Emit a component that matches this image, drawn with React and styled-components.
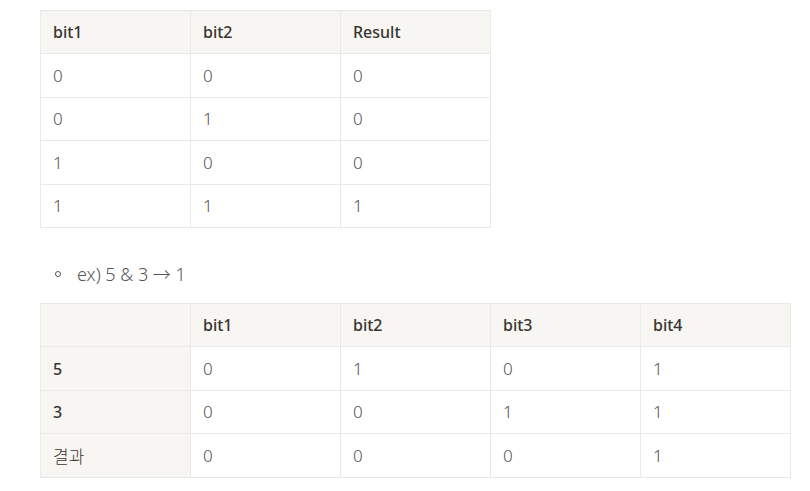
import React from "react";
import styled, { createGlobalStyle } from "styled-components";

const GlobalStyle = createGlobalStyle`
  body {
    margin: 0;
    background: #ffffff;
    font-family: "Noto Sans", "Noto Sans CJK KR", sans-serif;
    color: #37352f;
    -webkit-font-smoothing: antialiased;
  }
`;

const Page = styled.div`
  padding: 10px 0 0 40px;
`;

const Table = styled.table`
  border-collapse: collapse;
  table-layout: fixed;
  font-size: 17px;
`;

const Cell = styled.td`
  width: 150px;
  height: 43.4px;
  box-sizing: border-box;
  padding: 0 12px;
  border: 1px solid #e9e9e7;
  background: ${(p) => (p.$head ? "#f7f6f3" : "#ffffff")};
  color: ${(p) => (p.$head ? "#37352f" : "#555555")};
  font-weight: ${(p) => (p.$bold ? 500 : 300)};
  font-size: ${(p) => (p.$bold ? "16px" : "17px")};
  text-align: left;
  vertical-align: middle;
  white-space: nowrap;
`;

const Bullet = styled.div`
  display: flex;
  align-items: center;
  gap: 16px;
  height: 32px;
  margin: 29px 0 14px 15px;
  font-size: 18px;
  font-weight: 300;
  color: #555555;
`;

const Ring = styled.span`
  width: 4px;
  height: 4px;
  margin-top: 2px;
  border: 1.3px solid #555555;
  border-radius: 50%;
`;

const table1 = [
  ["0", "0", "0"],
  ["0", "1", "0"],
  ["1", "0", "0"],
  ["1", "1", "1"],
];

const table2 = [
  { label: "5", bold: true, vals: ["0", "1", "0", "1"] },
  { label: "3", bold: true, vals: ["0", "0", "1", "1"] },
  { label: "결과", bold: false, vals: ["0", "0", "0", "1"] },
];

export default function App() {
  return (
    <Page>
      <GlobalStyle />
      <Table>
        <tbody>
          <tr>
            {["bit1", "bit2", "Result"].map((h) => (
              <Cell key={h} $head $bold>
                {h}
              </Cell>
            ))}
          </tr>
          {table1.map((row, i) => (
            <tr key={i}>
              {row.map((v, j) => (
                <Cell key={j}>{v}</Cell>
              ))}
            </tr>
          ))}
        </tbody>
      </Table>

      <Bullet>
        <Ring />
        <span>ex) 5 &amp; 3 → 1</span>
      </Bullet>

      <Table>
        <tbody>
          <tr>
            {["", "bit1", "bit2", "bit3", "bit4"].map((h, i) => (
              <Cell key={i} $head $bold>
                {h}
              </Cell>
            ))}
          </tr>
          {table2.map((row) => (
            <tr key={row.label}>
              <Cell $head $bold={row.bold}>
                {row.label}
              </Cell>
              {row.vals.map((v, j) => (
                <Cell key={j}>{v}</Cell>
              ))}
            </tr>
          ))}
        </tbody>
      </Table>
    </Page>
  );
}
